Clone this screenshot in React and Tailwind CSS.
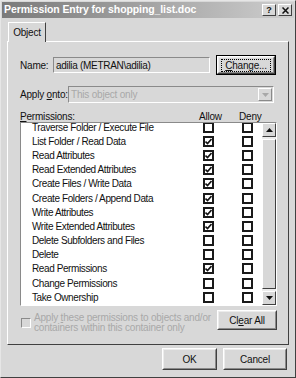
import React from "react";

const perms = [
  ["Traverse Folder / Execute File", false],
  ["List Folder / Read Data", true],
  ["Read Attributes", true],
  ["Read Extended Attributes", true],
  ["Create Files / Write Data", true],
  ["Create Folders / Append Data", true],
  ["Write Attributes", true],
  ["Write Extended Attributes", true],
  ["Delete Subfolders and Files", false],
  ["Delete", false],
  ["Read Permissions", true],
  ["Change Permissions", false],
  ["Take Ownership", false],
];

function Box({ checked }) {
  return (
    <div className="w-[11px] h-[11px] border-2 border-[#1a1a1a] bg-white flex items-center justify-center">
      {checked && (
        <svg width="7" height="7" viewBox="0 0 7 7">
          <path d="M0.5 3.5 L2.5 5.5 L6.5 1" stroke="#111" strokeWidth="1.6" fill="none" />
        </svg>
      )}
    </div>
  );
}

function Btn({ children, className = "", focus = false }) {
  return (
    <div className={`bg-[#d8d8d8] ${focus ? "border border-black" : ""} ${className}`}>
      <div className="h-full border border-t-white border-l-white border-r-[#404040] border-b-[#404040]">
        <div className="h-full border border-t-[#ececec] border-l-[#ececec] border-r-[#8a8a8a] border-b-[#8a8a8a] flex items-center justify-center">
          {focus ? (
            <span className="border border-dotted border-black px-[3px] leading-[11px]">{children}</span>
          ) : (
            children
          )}
        </div>
      </div>
    </div>
  );
}

export default function App() {
  return (
    <div
      className="w-[296px] h-[378px] bg-[#d8d8d8] text-[10px] text-[#111] border border-t-[#e6e6e6] border-l-[#e6e6e6] border-r-[#404040] border-b-[#404040] flex flex-col tracking-[-0.2px]"
      style={{ fontFamily: '"Liberation Sans", Arial, sans-serif' }}
    >
      <div className="mx-[1px] mt-[1px] h-[16px] bg-gradient-to-r from-[#7a7a7a] to-[#cfcfcf] flex items-center pl-[2px] pr-[2px]">
        <span className="text-white font-bold text-[10.5px] flex-1 tracking-[-0.1px]">Permission Entry for shopping_list.doc</span>
        <div className="w-[14px] h-[12px] bg-[#d8d8d8] border border-t-white border-l-white border-r-[#404040] border-b-[#404040] flex items-center justify-center font-bold text-[9px] leading-none">?</div>
        <div className="w-[14px] h-[12px] ml-[2px] bg-[#d8d8d8] border border-t-white border-l-white border-r-[#404040] border-b-[#404040] flex items-center justify-center">
          <svg width="7" height="7" viewBox="0 0 7 7">
            <path d="M0.5 0.5 L6.5 6.5 M6.5 0.5 L0.5 6.5" stroke="#111" strokeWidth="1.5" />
          </svg>
        </div>
      </div>

      <div className="pl-[6px] pr-[6px] pt-[3px] flex flex-col">
        <div className="flex">
          <div className="ml-[1px] w-[38px] h-[20px] border border-b-0 border-t-white border-l-white border-r-[#404040] flex items-center justify-center relative top-[1px] bg-[#d8d8d8] z-10">
            Object
          </div>
        </div>
        <div className="h-[304px] border border-t-white border-l-white border-r-[#404040] border-b-[#404040] pl-[12px] pr-[11px] flex flex-col">
          <div className="flex items-center mt-[13px]">
            <span className="w-[33px]">Name:</span>
            <div className="w-[157px] h-[16px] border border-t-[#8a8a8a] border-l-[#8a8a8a] border-r-white border-b-white flex items-center pl-[2px] tracking-[-0.3px]">
              adilia (METRAN\adilia)
            </div>
            <Btn focus className="ml-[6px] w-[60px] h-[20px]">
              <span><u>C</u>hange...</span>
            </Btn>
          </div>
          <div className="flex items-center mt-[11px]">
            <span className="w-[48px]">Apply <u>o</u>nto:</span>
            <div className="w-[206px] h-[17px] border border-t-[#8a8a8a] border-l-[#8a8a8a] border-r-white border-b-white flex items-center">
              <span className="pl-[2px] flex-1 text-[#a8a8a8]">This object only</span>
              <div className="w-[14px] h-[13px] mr-[1px] border border-t-white border-l-white border-r-[#8a8a8a] border-b-[#8a8a8a] flex items-center justify-center">
                <svg width="7" height="4" viewBox="0 0 7 4">
                  <path d="M0 0 H7 L3.5 4 Z" fill="#a8a8a8" />
                </svg>
              </div>
            </div>
          </div>
          <div className="flex items-center mt-[7px] h-[12px]">
            <span className="flex-1"><u>P</u>ermissions:</span>
            <span className="w-[40px]">Allow</span>
            <span className="w-[38px]">Deny</span>
          </div>
          <div className="h-[184px] border border-t-[#8a8a8a] border-l-[#8a8a8a] border-r-white border-b-white flex">
            <div className="flex-1 bg-white overflow-hidden flex flex-col">
              <div className="-mt-[3px]">
                {perms.map(([label, allow]) => (
                  <div key={label} className="h-[14.2px] flex items-center">
                    <span className="flex-1 pl-[11px] tracking-[-0.4px]">{label}</span>
                    <div className="w-[39px]">
                      <Box checked={allow} />
                    </div>
                    <div className="w-[20px]">
                      <Box checked={false} />
                    </div>
                  </div>
                ))}
              </div>
            </div>
            <div className="w-[14px] bg-[#ececec] flex flex-col">
              <div className="h-[14px] bg-[#d8d8d8] border border-t-white border-l-white border-r-[#404040] border-b-[#404040] flex items-center justify-center">
                <svg width="7" height="4" viewBox="0 0 7 4">
                  <path d="M0 4 H7 L3.5 0 Z" fill="#111" />
                </svg>
              </div>
              <div className="mt-[2px] h-[150px] bg-[#d8d8d8] border border-t-white border-l-white border-r-[#404040] border-b-[#404040]"></div>
              <div className="flex-1"></div>
              <div className="h-[14px] bg-[#d8d8d8] border border-t-white border-l-white border-r-[#404040] border-b-[#404040] flex items-center justify-center">
                <svg width="7" height="4" viewBox="0 0 7 4">
                  <path d="M0 0 H7 L3.5 4 Z" fill="#111" />
                </svg>
              </div>
            </div>
          </div>
          <div className="flex items-start mt-[4px]">
            <div className="mt-[8px] ml-[1px] w-[10px] h-[10px] border border-t-[#8a8a8a] border-l-[#8a8a8a] border-r-white border-b-white bg-[#d8d8d8]"></div>
            <div className="ml-[3px] mt-[3px] flex-1 text-[#a8a8a8] leading-[10px]">
              Apply <u>t</u>hese permissions to objects and/or
              <br />
              containers within this container only
            </div>
            <Btn className="w-[60px] h-[20px]">
              <span>Cl<u>e</u>ar All</span>
            </Btn>
          </div>
        </div>
        <div className="flex justify-end mt-[3px] gap-[6px] pr-[2px]">
          <Btn className="w-[55px] h-[22px]">OK</Btn>
          <Btn className="w-[64px] h-[22px]">Cancel</Btn>
        </div>
      </div>
    </div>
  );
}
